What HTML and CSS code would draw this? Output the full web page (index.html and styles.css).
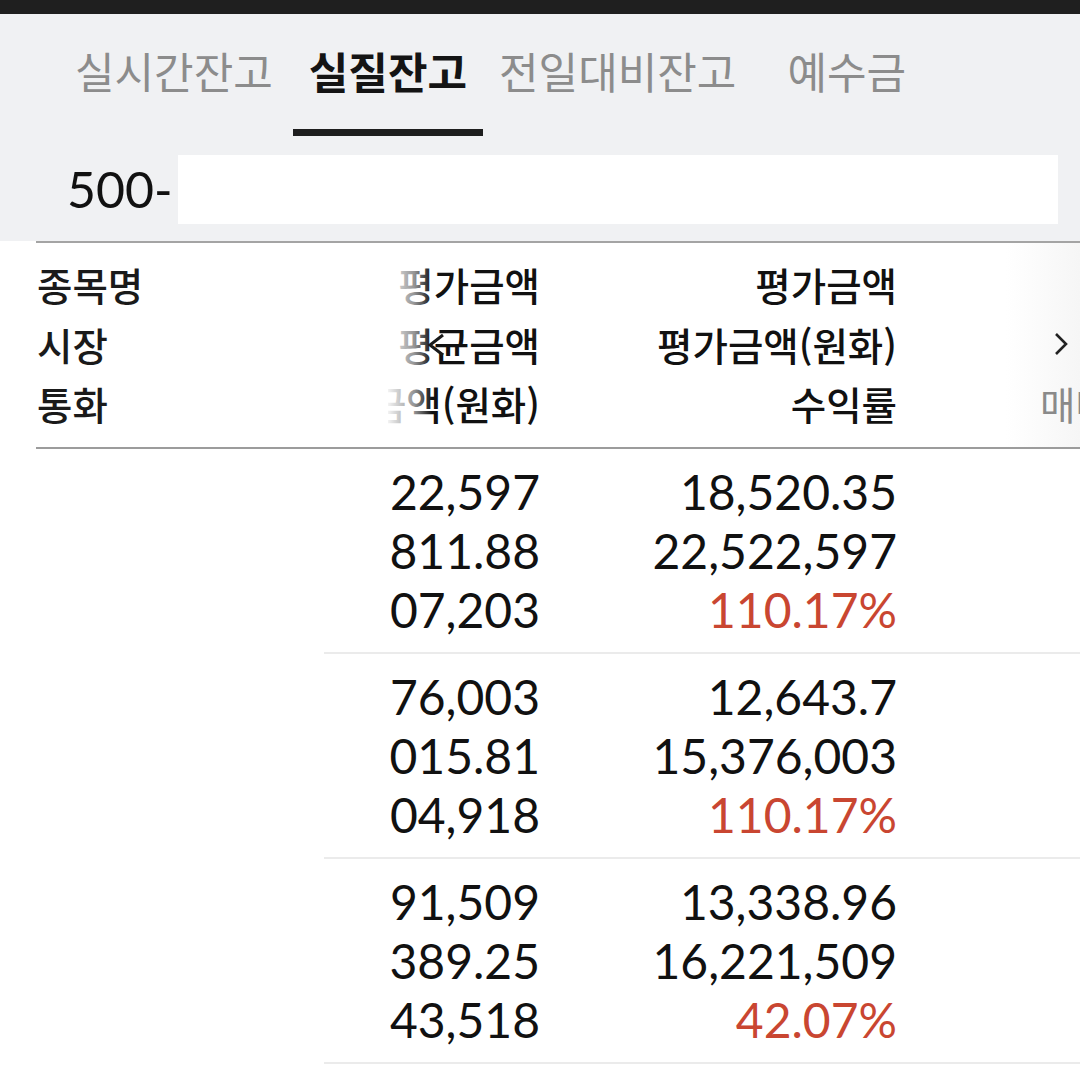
FILE: index.html
```html
<!DOCTYPE html>
<html lang="ko">
<head>
<meta charset="utf-8">
<title>실질잔고</title>
<link rel="stylesheet" href="styles.css">
</head>
<body>
<div class="screen">
  <div class="statusbar"></div>
  <header class="top">
    <nav class="tabs">
      <div class="tab">실시간잔고</div>
      <div class="tab active">실질잔고</div>
      <div class="tab">전일대비잔고</div>
      <div class="tab tab-last">예수금</div>
    </nav>
    <div class="account">
      <span class="acc-no">500-</span>
      <div class="acc-box"></div>
    </div>
  </header>

  <section class="thead">
    <div class="col c1">
      <div>종목명</div>
      <div>시장</div>
      <div>통화</div>
    </div>
    <div class="col c2">
      <div class="ln">평가금액</div>
      <div class="ln">평균금액</div>
      <div class="ln">평가금액(원화)</div>
      <span class="fade"></span>
      <span class="arrow-left"><svg width="20" height="26" viewBox="0 0 20 26"><path d="M17 3 L4 13 L17 23" fill="none" stroke="#1a1a1a" stroke-width="3"/></svg></span>
    </div>
    <div class="col c3">
      <div>평가금액</div>
      <div>평가금액(원화)</div>
      <div>수익률</div>
    </div>
    <div class="col c4">
      <div class="blank"></div>
      <div class="arrow-right"><svg width="16" height="26" viewBox="0 0 16 26"><path d="M3 3 L13 13 L3 23" fill="none" stroke="#222" stroke-width="2.6"/></svg></div>
      <div class="more">매매</div>
    </div>
  </section>

  <section class="rows">
    <div class="row">
      <div class="cell c2n"><div>22,597</div><div>811.88</div><div>07,203</div></div>
      <div class="cell c3n"><div>18,520.35</div><div>22,522,597</div><div class="up">110.17%</div></div>
    </div>
    <div class="row">
      <div class="cell c2n"><div>76,003</div><div>015.81</div><div>04,918</div></div>
      <div class="cell c3n"><div>12,643.7</div><div>15,376,003</div><div class="up">110.17%</div></div>
    </div>
    <div class="row">
      <div class="cell c2n"><div>91,509</div><div>389.25</div><div>43,518</div></div>
      <div class="cell c3n"><div>13,338.96</div><div>16,221,509</div><div class="up">42.07%</div></div>
    </div>
  </section>
</div>
</body>
</html>
```
FILE: styles.css
```css
* { box-sizing: border-box; }
html, body { margin: 0; padding: 0; background: #fff; }
body {
  width: 1080px;
  height: 1080px;
  overflow: hidden;
  font-family: "Noto Sans CJK KR", "Noto Sans", sans-serif;
  color: #111;
}
.screen { width: 1080px; height: 1080px; overflow: hidden; position: relative; }

.statusbar { height: 14px; background: #1f1f1f; }

.top {
  background: #f0f1f3;
  height: 227px;
}
.tabs {
  display: flex;
  padding-left: 59px;
  height: 122px;
}
.tab {
  font-size: 43px;
  color: #8c8c8c;
  padding: 0 16px;
  height: 122px;
  line-height: 112px;
  white-space: nowrap;
}
.tab.active {
  margin-left: 4px;
  color: #141414;
  font-weight: 700;
  border-bottom: 7px solid #1e1e1e;
}
.tab-last { margin-left: 19px; }

.account {
  display: flex;
  align-items: center;
  padding-left: 67px;
  margin-top: 19px;
  height: 69px;
}
.acc-no {
  font-family: "Lato", "Noto Sans", sans-serif;
  font-size: 50px;
  color: #111;
  width: 111px;
  line-height: 69px;
}
.acc-box {
  width: 880px;
  height: 69px;
  background: #fff;
}

.thead {
  margin-left: 36px;
  border-top: 2px solid #a4a4a4;
  border-bottom: 2px solid #9c9c9c;
  display: grid;
  grid-template-columns: 352px 152px 357px 1fr;
  padding: 12px 0 13px;
  font-size: 38.5px;
  font-weight: 500;
  line-height: 59.5px;
  background: linear-gradient(to right, #fff 0, #fff 970px, #f6f6f6 1044px);
}
.col { white-space: nowrap; }
.c1 { padding-left: 1px; color: #1a1a1a; }
.c2 {
  position: relative;
  overflow: hidden;
  display: flex;
  flex-direction: column;
  align-items: flex-end;
}
.c2 .ln { flex: none; height: 59.5px; }
.c3 { text-align: right; }
.fade {
  position: absolute;
  left: 0;
  top: 0;
  bottom: 0;
  width: 44px;
  background: linear-gradient(to right, rgba(255,255,255,0.95), rgba(255,255,255,0.55) 60%, rgba(255,255,255,0));
}
.arrow-left {
  position: absolute;
  left: 38px;
  top: 77px;
  width: 20px;
  height: 26px;
}
.arrow-left svg, .arrow-right svg { display: block; }
.c4 {
  overflow: hidden;
  position: relative;
}
.blank { height: 59.5px; }
.arrow-right {
  height: 59.5px;
  display: flex;
  align-items: center;
  padding-left: 156px;
}
.more {
  padding-left: 143px;
  color: #8a8a8a;
  font-weight: 400;
}

.row {
  margin-left: 324px;
  display: grid;
  grid-template-columns: 64px 152px 357px 1fr;
  grid-template-areas: ". a b .";
  padding: 13px 0 13px;
  border-bottom: 2px solid #ebebeb;
  font-family: "Lato", "Noto Sans", sans-serif;
  font-size: 48px;
  line-height: 59px;
  color: #111;
}
.cell { text-align: right; white-space: nowrap; }
.c2n { grid-area: a; }
.c3n { grid-area: b; }
.up { color: #c94631; }
```
